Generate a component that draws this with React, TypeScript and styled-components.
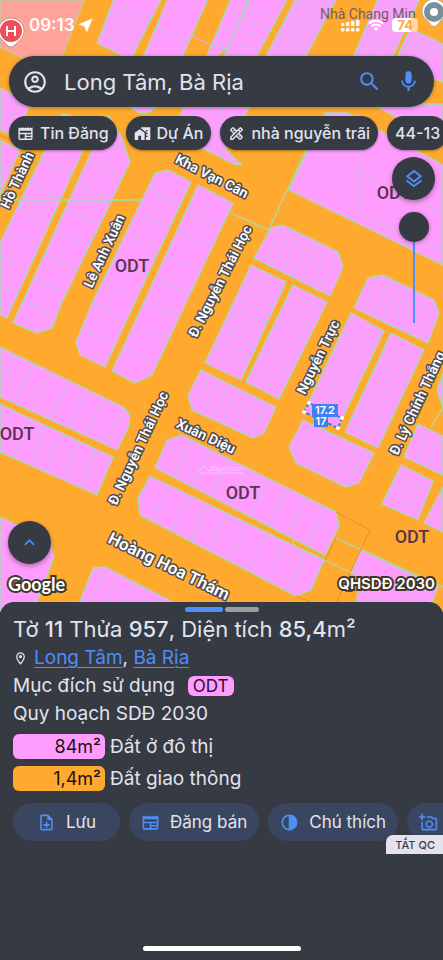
import React from "react";
import styled, { createGlobalStyle } from "styled-components";
import {
  MdOutlineAccountCircle,
  MdSearch,
  MdMic,
  MdNewspaper,
  MdMapsHomeWork,
  MdOutlineDesignServices,
  MdOutlineLayers,
  MdKeyboardArrowUp,
  MdOutlineLocationOn,
  MdOutlineNoteAdd,
  MdOutlineAddAPhoto,
  MdContrast,
  MdNearMe,
} from "react-icons/md";

const color = {
  surface: "#363a43",
  text: "#e2e3ee",
  blue: "#4f8df8",
  tonal: "#3a465f",
  road: "#ffa92f",
  plot: "#ff9dff",
  edge: "#a5dcb4",
  rule: "#d2b6e8",
};

const GlobalStyle = createGlobalStyle`
  *, *::before, *::after { box-sizing: border-box; }
  body { margin: 0; background: ${color.surface}; }
  button, input { font: inherit; color: inherit; border: 0; margin: 0; padding: 0; background: none; }
`;

const Screen = styled.main`
  display: flex;
  flex-direction: column;
  min-height: 100vh;
  overflow: hidden;
  font-family: Inter, Roboto, sans-serif;
  color: ${color.text};
`;

const MapArea = styled.section`
  position: relative;
  flex: 1;
  display: flex;
  flex-direction: column;
  min-height: 480px;
  margin-bottom: -10px;
  padding-bottom: 16px;
  background: ${color.road};
`;

const MapDrawing = styled.svg`
  position: absolute;
  inset: 0;
  width: 100%;
  height: 100%;
`;

const Overlay = styled.div`
  position: relative;
  flex: 1;
  display: flex;
  flex-direction: column;
`;

const StatusBar = styled.div`
  display: flex;
  align-items: center;
  justify-content: space-between;
  height: 56px;
  padding: 0 25px 6px 29px;
  color: #fff;
`;

const Clock = styled.div`
  display: flex;
  align-items: center;
  gap: 2px;
  font-size: 17px;
  font-weight: 600;
`;

const StatusIcons = styled.div`
  display: flex;
  align-items: center;
  gap: 8px;
`;

const Battery = styled.span`
  padding: 0 5px;
  border-radius: 4px;
  background: linear-gradient(90deg, #fff 74%, #ffd9a8 74%);
  color: #ffa64a;
  font-size: 13px;
  line-height: 14px;
  font-weight: 700;
`;

const SearchBar = styled.form`
  display: flex;
  align-items: center;
  gap: 12px;
  height: 51px;
  margin: 0 9px;
  padding: 0 12px;
  border-radius: 26px;
  background: ${color.surface};
  box-shadow: 0 1px 4px rgba(0, 0, 0, 0.35);
`;

const SearchInput = styled.input`
  flex: 1;
  min-width: 0;
  padding-left: 4px;
  font-size: 22px;
  outline: none;
`;

const IconButton = styled.button<{ $accent?: boolean }>`
  display: grid;
  place-items: center;
  width: 27px;
  height: 27px;
  color: ${(p) => (p.$accent ? color.blue : color.text)};
`;

const ChipRow = styled.nav`
  display: flex;
  gap: 9px;
  margin-top: 9px;
  padding-left: 9px;
  overflow: hidden;
  padding-bottom: 3px;
`;

const Chip = styled.button`
  display: flex;
  align-items: center;
  flex: none;
  gap: 6px;
  height: 34px;
  padding: 0 8px;
  border-radius: 17px;
  background: ${color.surface};
  box-shadow: 0 1px 3px rgba(0, 0, 0, 0.35);
  font-size: 16px;
  font-weight: 500;
  white-space: nowrap;
`;

const Tools = styled.div`
  display: flex;
  flex-direction: column;
  align-items: center;
  align-self: flex-end;
  gap: 12px;
  margin: 4px 8px 0 0;
`;

const RoundButton = styled.button`
  display: grid;
  place-items: center;
  width: 43px;
  height: 43px;
  border-radius: 50%;
  background: ${color.surface};
  color: ${color.blue};
  box-shadow: 0 2px 5px rgba(0, 0, 0, 0.35);
`;

const OpacitySlider = styled.input`
  appearance: none;
  writing-mode: vertical-lr;
  direction: rtl;
  width: 30px;
  height: 111px;
  background: linear-gradient(${color.blue}, ${color.blue}) center / 2px 100% no-repeat;

  &::-webkit-slider-thumb {
    appearance: none;
    width: 30px;
    height: 30px;
    border-radius: 50%;
    background: ${color.surface};
    box-shadow: 0 1px 4px rgba(0, 0, 0, 0.35);
  }
`;

const MapFooter = styled.div`
  display: flex;
  flex-direction: column;
  align-items: flex-start;
  gap: 8px;
  margin-top: auto;
  padding: 0 8px;
`;

const Credits = styled.div`
  display: flex;
  justify-content: space-between;
  align-items: center;
  align-self: stretch;
  line-height: 24px;
  color: #fff;
  -webkit-text-stroke: 4px #40362c;
  paint-order: stroke fill;
`;

const Brand = styled.span`
  font-family: Lato, sans-serif;
  font-size: 18px;
  font-weight: 700;
`;

const LayerName = styled.span`
  font-size: 15px;
  font-weight: 600;
`;

const Sheet = styled.section`
  position: relative;
  display: flex;
  flex-direction: column;
  min-height: 358px;
  padding: 5px 0 9px;
  border-radius: 14px 14px 0 0;
  background: ${color.surface};
`;

const Pager = styled.div`
  display: flex;
  justify-content: center;
  gap: 2px;
`;

const PageMark = styled.button<{ $active?: boolean }>`
  width: ${(p) => (p.$active ? 38 : 34)}px;
  height: 5px;
  border-radius: 3px;
  background: ${(p) => (p.$active ? color.blue : "#9d9da0")};
`;

const Details = styled.div`
  display: flex;
  flex-direction: column;
  padding: 2px 13px 0;
`;

const Title = styled.h1`
  margin: 0;
  font-size: 22px;
  line-height: 30px;
  font-weight: 400;

  b { font-weight: 500; }
`;

const Line = styled.p`
  display: flex;
  align-items: center;
  margin: 0;
  font-size: 19px;
  line-height: 28px;
`;

const Place = styled.span`
  padding-left: 6px;
`;

const PlaceLink = styled.a`
  color: ${color.blue};
  text-decoration: underline;
  text-underline-offset: 3px;
  text-decoration-thickness: 1px;
`;

const Code = styled.span`
  margin-left: 13px;
  padding: 0 5px;
  border-radius: 6px;
  background: ${color.plot};
  color: #2a1030;
  font-size: 17px;
  line-height: 20px;
`;

const Uses = styled.ul`
  display: flex;
  flex-direction: column;
  gap: 7px;
  margin: 6px 0 0;
  padding: 0;
  list-style: none;
`;

const Use = styled.li`
  display: flex;
  align-items: center;
  gap: 5px;
  font-size: 19px;
  line-height: 25px;
`;

const Amount = styled.span<{ $fill: string }>`
  width: 92px;
  padding-right: 4px;
  border-radius: 6px;
  background: ${(p) => p.$fill};
  color: #1c1216;
  font-size: 18px;
  text-align: right;
`;

const Actions = styled.div`
  display: flex;
  gap: 9px;
  margin-top: 12px;
  padding-left: 13px;
  overflow: hidden;
`;

const Action = styled.button`
  display: flex;
  align-items: center;
  justify-content: center;
  flex: none;
  gap: 10px;
  min-width: 107px;
  height: 38px;
  padding: 0 12px;
  border-radius: 19px;
  background: ${color.tonal};
  font-size: 17px;

  svg { color: ${color.blue}; }
`;

const PhotoAction = styled(Action)`
  justify-content: flex-start;
`;

const MirroredIcon = styled.span`
  display: flex;
  transform: scaleX(-1);
`;

const AdToggle = styled.button`
  position: absolute;
  right: 0;
  top: 233px;
  height: 19px;
  padding: 0 8px 0 9px;
  border-radius: 7px 0 0 0;
  background: #e5e2f0;
  color: #3b3c47;
  font-size: 11px;
  font-weight: 500;
`;

const HomeIndicator = styled.div`
  align-self: center;
  width: 158px;
  height: 5px;
  margin-top: auto;
  border-radius: 3px;
  background: #fff;
`;

type Edge = [number, number, number, number];
type Block = { points: string; a?: Edge; b?: Edge; n?: number };

/* Each block is ruled into n parcels by lines that join edge a to edge b. */
const blocks: Block[] = [
  { points: "115,-4 163,-4 133,55 125,57 97,43", a: [115, -4, 97, 43], b: [163, 12, 145, 59], n: 6 },
  { points: "169,-4 209,-4 181,60 142,60", a: [169, -4, 142, 60], b: [209, 12, 182, 76], n: 2 },
  { points: "232,-4 249,-4 233,43 212,60 205,60", a: [232, -4, 205, 60], b: [249, 2, 228, 66], n: 4 },
  { points: "251,-4 289,-4 255,60 222,60", a: [251, -4, 222, 60], b: [289, 12, 260, 76], n: 6 },
  { points: "297,-4 338,-4 304,60 264,60", a: [297, -20, 264, 60], b: [338, -2, 304, 78], n: 14 },
  { points: "379,-4 421,-4 391,60 352,60", a: [379, -20, 352, 60], b: [421, -2, 391, 78], n: 12 },
  { points: "410,28 443,44 443,82 425,76 396,60", a: [410, 28, 443, 44], b: [388, 60, 421, 86], n: 7 },
  { points: "0,88 30,104 24,118 22,140 0,130", a: [0, 88, 30, 104], b: [-16, 130, 14, 146], n: 3 },
  { points: "0,140 20,150 0,195", a: [0, 135, 0, 195], b: [20, 145, 20, 205], n: 2 },
  { points: "128,106 158,106 148,113 140,113" },
  { points: "184,106 250,106 226,150 242,165 234,164 182,138 176,126", a: [184, 106, 250, 106], b: [160, 155, 226, 186], n: 5 },
  { points: "62,114 98,122 83,150 7,318 0,315 0,243 45,150", a: [62, 114, -38, 322], b: [101, 130, 3, 346], n: 9 },
  { points: "109,116 122,138 130,162 112,200 63,300 52,328 37,333 13,323 92,150", a: [109, 116, 13, 323], b: [148, 134, 52, 344], n: 9 },
  { points: "155,173 168,170 191,182 105,367 80,355 76,342 92,303", a: [158, 165, 72, 350], b: [191, 182, 105, 367], n: 8 },
  { points: "198,185 233,203 229,212 152,375 135,383 112,371", a: [198, 185, 112, 371], b: [234, 201, 149, 386], n: 8 },
  { points: "0,347 123,407 130,415 129,426 117,450 0,397", a: [-20, 337, 142, 416], b: [-44, 383, 118, 460], n: 9 },
  { points: "0,404 113,457 97,495 0,452", a: [-22, 394, 113, 457], b: [-38, 434, 97, 495], n: 8 },
  { points: "0,517 50,540 54,557 33,614 0,614" },
  { points: "93,568 105,567 196,614 75,614", a: [93, 562, 200, 616], b: [68, 612, 176, 666], n: 8 },
  { points: "182,435 221,455 336,512 339,526 325,555 155,468 167,440", a: [172, 430, 346, 518], b: [155, 468, 325, 555], n: 9 },
  { points: "150,476 324,560 311,590 296,596 140,515 138,498", a: [150, 476, 324, 560], b: [132, 512, 306, 602], n: 9 },
  { points: "271,228 283,225 338,252 343,267 330,296 254,258", a: [272, 221, 346, 258], b: [254, 258, 330, 296], n: 8 },
  { points: "251,265 286,282 241,380 205,363", a: [251, 265, 205, 363], b: [286, 282, 241, 380], n: 12 },
  { points: "293,285 327,302 279,399 246,382", a: [293, 285, 246, 382], b: [327, 302, 279, 399], n: 12 },
  { points: "201,370 276,407 264,433 253,438 192,410 188,395", a: [201, 370, 276, 407], b: [183, 405, 258, 442], n: 8 },
  { points: "289,190 325,113 348,113 443,165 443,265" },
  { points: "372,104 443,104 443,143", a: [372, 100, 443, 135], b: [362, 120, 433, 155], n: 3 },
  { points: "368,278 383,275 434,300 439,313 428,343 354,308", a: [370, 270, 444, 305], b: [354, 308, 428, 343], n: 8 },
  { points: "351,313 384,331 338,428 304,412", a: [351, 313, 304, 412], b: [384, 331, 338, 428], n: 12 },
  { points: "391,333 424,350 378,448 345,432", a: [391, 333, 345, 432], b: [424, 350, 378, 448], n: 12 },
  { points: "303,420 374,453 359,483 346,487 296,463 289,447", a: [303, 420, 374, 453], b: [283, 457, 354, 491], n: 8 },
  { points: "418,424 443,436 443,475 404,457", a: [418, 424, 450, 440], b: [404, 457, 436, 473], n: 3 },
  { points: "443,373 437,390 443,407" },
  { points: "401,465 433,481 418,520 382,504", a: [401, 465, 382, 504], b: [433, 481, 418, 520], n: 4 },
  { points: "443,487 424,523 443,532" },
  { points: "361,550 438,587 428,614 354,614 361,578 351,573", a: [361, 550, 336, 600], b: [438, 587, 413, 637], n: 3 },
];

const streets: { text: string; x: number; y: number; angle: number; size?: number }[] = [
  { text: "Hồ Thành", x: 17, y: 180, angle: -65 },
  { text: "Lê Anh Xuân", x: 104, y: 251, angle: -65 },
  { text: "Kha Vạn Cân", x: 212, y: 176, angle: 27 },
  { text: "Đ. Nguyễn Thái Học", x: 220, y: 281, angle: -63 },
  { text: "Đ. Nguyễn Thái Học", x: 138, y: 448, angle: -65 },
  { text: "Nguyễn Trực", x: 318, y: 357, angle: -64 },
  { text: "Xuân Diệu", x: 206, y: 436, angle: 25 },
  { text: "Đ. Lý Chính Thắng", x: 417, y: 403, angle: -65 },
  { text: "Hoàng Hoa Thám", x: 169, y: 566, angle: 26, size: 17 },
];

const zones = [
  [132, 265],
  [394, 192],
  [17, 433],
  [243, 492],
  [412, 536],
];

function rulings({ a, b, n = 0 }: Block) {
  if (!a || !b) return "";
  let d = "";
  for (let i = 1; i < n; i++) {
    const t = i / n;
    const at = (e: Edge) => `${Math.round(e[0] + (e[2] - e[0]) * t)} ${Math.round(e[1] + (e[3] - e[1]) * t)}`;
    d += `M${at(a)}L${at(b)}`;
  }
  return d;
}

function PlanningMap() {
  return (
    <MapDrawing viewBox="0 0 443 612" preserveAspectRatio="xMidYMin slice" aria-label="QHSDĐ 2030">
      <path d="M0 0H84L60 62H30L0 47Z" fill="#ffa298" stroke={color.edge} />
      {blocks.map((block, i) => (
        <g key={i}>
          <clipPath id={`block${i}`}>
            <polygon points={block.points} />
          </clipPath>
          <polygon points={block.points} fill={color.plot} />
          <path d={rulings(block)} stroke={color.rule} strokeWidth="1.3" fill="none" clipPath={`url(#block${i})`} />
          <polygon points={block.points} fill="none" stroke={color.edge} strokeWidth="1.3" />
        </g>
      ))}
      <g fill="none" stroke={color.edge} strokeWidth="1.3">
        <path d="M0 200H142M306 150L268 231M229 212L268 230M443 407L431 427" />
        <path d="M336 538L443 587M294 538L293 545L325 560L352 573" />
        <path d="M358 113V214L443 250M358 172L443 213M190 35L222 50" stroke={color.rule} />
      </g>
      <path d="M336 512L370 530L336 603M336 538L325 560M296 596L312 603M0 135L12 141" fill="none" stroke="#f08b2c" />

      <g fontFamily="Roboto, sans-serif" fontSize="18" fontWeight="500" fill="#5a3350" textAnchor="middle">
        {zones.map(([x, y]) => (
          <text key={`${x}-${y}`} x={x} y={y} dominantBaseline="central">ODT</text>
        ))}
      </g>

      <g
        fontFamily="Roboto, sans-serif"
        fontWeight="600"
        fill="#fff"
        stroke="#4d4b55"
        strokeWidth="3"
        strokeLinejoin="round"
        paintOrder="stroke"
        textAnchor="middle"
      >
        {streets.map((s, i) => (
          <text
            key={i}
            fontSize={s.size ?? 14}
            dominantBaseline="central"
            transform={`translate(${s.x} ${s.y}) rotate(${s.angle})`}
          >
            {s.text}
          </text>
        ))}
      </g>

      <g>
        <path d="M309 403L342 418L338 428L304 412Z" fill="none" stroke="#3f7be8" strokeWidth="2" strokeDasharray="4 2" />
        <path d="M312 404h26v13h-10v10h-14v-10h-2z" fill="#3f80ee" />
        <g fill="#fff" fontFamily="Inter, sans-serif" fontSize="11" fontWeight="600" textAnchor="middle">
          <text x="325" y="414">17.2</text>
          <text x="321" y="425">17</text>
        </g>
        <g fill="#fff">
          <circle cx="309" cy="403" r="2" />
          <circle cx="342" cy="418" r="2" />
          <circle cx="338" cy="428" r="2" />
          <circle cx="304" cy="412" r="2" />
        </g>
      </g>

      <path d="M198 472l6-7 5 6 5-5 6 6M198 473h46" stroke="#fff" strokeOpacity="0.3" fill="none" />
      <text x="210" y="471" fill="#fff" fillOpacity="0.35" fontFamily="Inter, sans-serif" fontSize="6">Batdongsan</text>

      <text x="320" y="19" fill="#765d65" fontFamily="Roboto, sans-serif" fontSize="14">Nhà Chang Min</text>

      <g>
        <path d="M11 18a13 13 0 0 1 13 13c0 7-6 10-9 14q-4 4-8 0C4 41-2 38-2 31A13 13 0 0 1 11 18Z" fill="#fff" stroke="#8d6e6b" strokeOpacity="0.6" />
        <circle cx="11" cy="31" r="11" fill="#ef4d5a" />
        <path d="M7 26v10M15 26v10M7 31h8" stroke="#fff" strokeWidth="2" />
      </g>
      <g>
        <path d="M434-1a12 12 0 0 1 12 12c0 7-6 9-8 13q-4 5-8 0c-2-4-8-6-8-13A12 12 0 0 1 434-1Z" fill="#fff" stroke="#8a8a8a" strokeOpacity="0.6" />
        <circle cx="434" cy="12" r="10" fill="#78909c" />
        <circle cx="434" cy="12" r="4" fill="#fff" />
      </g>
    </MapDrawing>
  );
}

function SignalIcon() {
  return (
    <svg width="19" height="13" viewBox="0 0 19 13" fill="#fff" aria-hidden="true">
      {[0, 5, 10, 15].map((x, i) => (
        <g key={x}>
          <rect x={x} y={4 - i} width="3.4" height={3 + i} rx="1" />
          <rect x={x} y="9" width="3.4" height="3.4" rx="1.2" />
        </g>
      ))}
    </svg>
  );
}

function WifiIcon() {
  return (
    <svg width="16" height="12" viewBox="0 0 16 12" aria-hidden="true">
      <g fill="none" stroke="#fff" strokeWidth="2">
        <path d="M1 4.5a10 10 0 0 1 14 0M3.6 7.3a6.2 6.2 0 0 1 8.8 0" />
      </g>
      <path d="M8 12L5.6 9.4a3.4 3.4 0 0 1 4.8 0Z" fill="#fff" />
    </svg>
  );
}

export default function App() {
  return (
    <Screen>
      <GlobalStyle />
      <MapArea>
        <PlanningMap />
        <Overlay>
          <StatusBar>
            <Clock>
              09:13 <MdNearMe size={18} />
            </Clock>
            <StatusIcons>
              <SignalIcon />
              <WifiIcon />
              <Battery>74</Battery>
            </StatusIcons>
          </StatusBar>
          <SearchBar onSubmit={(e) => e.preventDefault()}>
            <IconButton type="button" aria-label="Tài khoản">
              <MdOutlineAccountCircle size={26} />
            </IconButton>
            <SearchInput aria-label="Tìm kiếm" defaultValue="Long Tâm, Bà Rịa" />
            <IconButton $accent type="submit" aria-label="Tìm">
              <MdSearch size={25} />
            </IconButton>
            <IconButton $accent type="button" aria-label="Giọng nói">
              <MdMic size={25} />
            </IconButton>
          </SearchBar>
          <ChipRow>
            <Chip><MdNewspaper size={17} />Tin Đăng</Chip>
            <Chip><MdMapsHomeWork size={17} />Dự Án</Chip>
            <Chip><MdOutlineDesignServices size={17} />nhà nguyễn trãi</Chip>
            <Chip>44-13</Chip>
          </ChipRow>
          <Tools>
            <RoundButton aria-label="Lớp bản đồ">
              <MdOutlineLayers size={22} />
            </RoundButton>
            <OpacitySlider type="range" min={0} max={100} defaultValue={100} aria-label="Độ mờ" />
          </Tools>
          <MapFooter>
            <RoundButton aria-label="Mở rộng">
              <MdKeyboardArrowUp size={21} />
            </RoundButton>
            <Credits>
              <Brand>Google</Brand>
              <LayerName>QHSDĐ 2030</LayerName>
            </Credits>
          </MapFooter>
        </Overlay>
      </MapArea>

      <Sheet>
        <Pager>
          <PageMark $active aria-label="Trang 1" />
          <PageMark aria-label="Trang 2" />
        </Pager>
        <Details>
          <Title>
            Tờ <b>11</b> Thửa <b>957</b>, Diện tích <b>85,4</b>m²
          </Title>
          <Line>
            <MdOutlineLocationOn size={15} />
            <Place>
              <PlaceLink href="#long-tam">Long Tâm</PlaceLink>, <PlaceLink href="#ba-ria">Bà Rịa</PlaceLink>
            </Place>
          </Line>
          <Line>
            Mục đích sử dụng <Code>ODT</Code>
          </Line>
          <Line>Quy hoạch SDĐ 2030</Line>
          <Uses>
            <Use><Amount $fill={color.plot}>84m²</Amount>Đất ở đô thị</Use>
            <Use><Amount $fill={color.road}>1,4m²</Amount>Đất giao thông</Use>
          </Uses>
        </Details>
        <Actions>
          <Action><MdOutlineNoteAdd size={19} />Lưu</Action>
          <Action><MdNewspaper size={19} />Đăng bán</Action>
          <Action><MirroredIcon><MdContrast size={19} /></MirroredIcon>Chú thích</Action>
          <PhotoAction aria-label="Thêm ảnh"><MdOutlineAddAPhoto size={19} /></PhotoAction>
        </Actions>
        <AdToggle>TẮT QC</AdToggle>
        <HomeIndicator />
      </Sheet>
    </Screen>
  );
}
